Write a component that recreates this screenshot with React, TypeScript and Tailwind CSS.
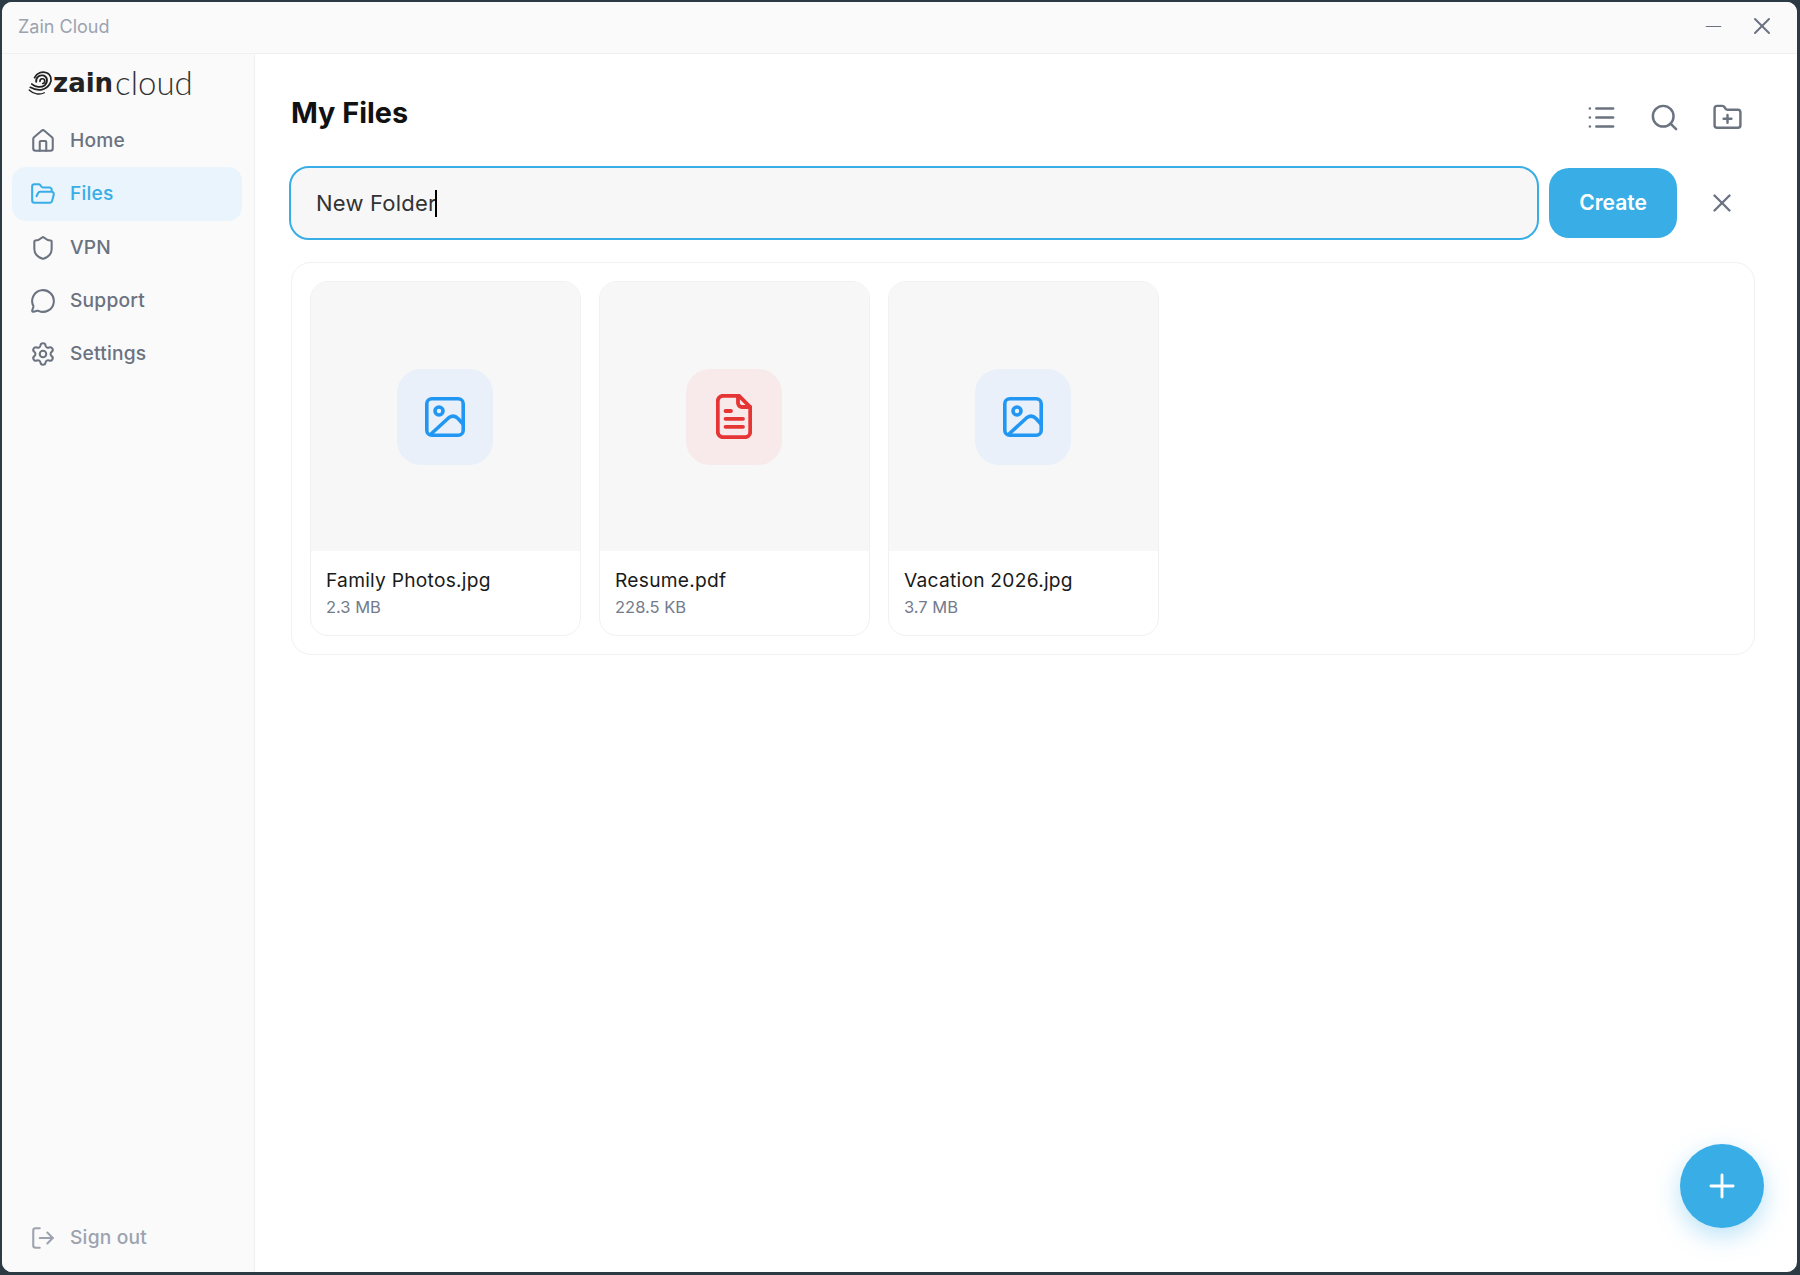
import { FolderOpen, FolderPlus, House, List, LogOut, MessageCircle, Minus, Plus, Search, Settings, Shield, X } from "lucide-react";

const NAV = [
  { label: "Home", icon: House },
  { label: "Files", icon: FolderOpen, active: true },
  { label: "VPN", icon: Shield },
  { label: "Support", icon: MessageCircle },
  { label: "Settings", icon: Settings },
];

const FILES = [
  { name: "Family Photos.jpg", size: "2.3 MB", kind: "image" },
  { name: "Resume.pdf", size: "228.5 KB", kind: "pdf" },
  { name: "Vacation 2026.jpg", size: "3.7 MB", kind: "image" },
];

const ImageGlyph = () => (
  <svg viewBox="0 0 40 40" className="h-10 w-10" fill="none" stroke="#2196f3" strokeWidth="3.6" strokeLinecap="round" strokeLinejoin="round">
    <rect x="1.8" y="1.8" width="36.4" height="36.4" rx="5" />
    <circle cx="14" cy="14" r="4" />
    <path d="M6 37 L24 20.5 Q29 17.5 33 21.5 L38 27" />
  </svg>
);

const PdfGlyph = () => (
  <svg viewBox="0 0 36 45" className="h-[45px] w-9" fill="none" stroke="#e53535" strokeWidth="3.8" strokeLinecap="round" strokeLinejoin="round">
    <path d="M23 1.8 H7 a5.2 5.2 0 0 0 -5.2 5.2 V38 a5.2 5.2 0 0 0 5.2 5.2 H29 a5.2 5.2 0 0 0 5.2 -5.2 V13 Z" />
    <path d="M22 2 V9 a4 4 0 0 0 4 4 H34" />
    <path d="M9.5 17 H15 M9.5 24.8 H27 M9.5 32.8 H27" />
  </svg>
);

const Swirl = () => (
  <svg viewBox="0 0 24 24" className="h-[26px] w-[26px] shrink-0" fill="none" stroke="#222" strokeLinecap="round">
    <path d="M12 10.5 a2.2 2.2 0 1 1 2.5 2" strokeWidth="1.5" />
    <path d="M8.5 11 C8 6 12 4.5 15 5 C19 6 19.5 11 16.5 14 C13 16.5 8 16 4.5 13" strokeWidth="1.7" />
    <path d="M7 7 C9 2.5 14 1 18 2.5 C22 4 23.5 9 21 13 C18 18 11 20.5 3 16" strokeWidth="1.6" />
    <path d="M2 18.5 C6 22.5 12 23 16 21" strokeWidth="1.2" />
  </svg>
);

const App = () => {
  return (
    <div className="h-screen w-full bg-[#2c3a44] pt-[2px] pl-[2px] pr-[3px] pb-[3px] font-['Inter',sans-serif]">
      <div className="flex h-full flex-col overflow-hidden rounded-[10px] bg-white">
        {/* title bar */}
        <div className="flex h-[52px] shrink-0 items-center justify-between border-b border-[#f0f0f0] bg-[#fafafa] pb-[3px] pl-[16px] pr-[21px]">
          <span className="text-[18px] text-[#9ca3af]">Zain Cloud</span>
          <div className="flex items-center gap-[22px] text-[#6b7280]">
            <Minus className="h-[25px] w-[25px]" strokeWidth={1} />
            <X className="h-[28px] w-[28px]" strokeWidth={1.7} />
          </div>
        </div>

        <div className="flex min-h-0 flex-1">
          {/* sidebar */}
          <aside className="flex w-[253px] shrink-0 flex-col border-r border-[#f0f0f0] bg-[#fafafa] pb-[20px] pl-[10px] pr-[12px]">
            <div className="flex h-[50px] items-center pl-[15px] pt-[7px]">
              <Swirl />
              <span className="font-['DejaVu_Sans',sans-serif] text-[26px] leading-none font-bold text-[#222]">zain</span>
              <span className="ml-[2px] font-['Lato',sans-serif] text-[33px] leading-none font-light text-[#333]">cloud</span>
            </div>
            <nav className="flex flex-col pt-[10px]">
              {NAV.map((item) => (
                <div
                  key={item.label}
                  className={`mb-[-0.7px] flex h-[54px] items-center gap-[14px] rounded-[14px] pl-[18px] text-[19.2px] font-medium tracking-[0.2px] ${
                    item.active ? "bg-[#eaf4fc] text-[#38ade6]" : "text-[#6b7280]"
                  }`}
                >
                  <item.icon className="h-[26px] w-[26px]" strokeWidth={1.9} />
                  <span className="pb-[1px]">{item.label}</span>
                </div>
              ))}
            </nav>
            <div className="mt-auto flex items-center gap-[14px] pl-[18px] text-[19.2px] font-medium tracking-[0.2px] text-[#9ca3af]">
              <LogOut className="h-[26px] w-[26px]" strokeWidth={1.9} />
              <span>Sign out</span>
            </div>
          </aside>

          {/* main */}
          <main className="relative flex min-w-0 flex-1 flex-col pl-[36px] pr-[42px]">
            <div className="flex h-[112px] shrink-0 items-center justify-between pt-[6px]">
              <h1 className="text-[28.8px] font-bold text-[#111]">My Files</h1>
              <div className="mr-[12px] mt-[8px] flex items-center gap-[32px] text-[#6b7280]">
                <List className="h-[31px] w-[31px]" strokeWidth={1.9} />
                <Search className="h-[31px] w-[31px]" strokeWidth={1.9} />
                <FolderPlus className="h-[31px] w-[31px]" strokeWidth={1.9} />
              </div>
            </div>

            <div className="ml-[-2px] mr-[-12px] flex h-[74px] shrink-0 items-center">
              <div className="flex h-[74px] flex-1 items-center rounded-[20px] border-2 border-[#38ade6] bg-[#f7f7f7] pl-[25px] text-[22px] tracking-[0.2px] text-[#333]">
                New Folder<span className="ml-[-1px] inline-block h-[27px] w-[2px] bg-black" />
              </div>
              <button className="ml-[10px] h-[70px] w-[128px] rounded-[20px] bg-[#38ade6] text-[21px] font-semibold text-white">
                Create
              </button>
              <div className="flex w-[90px] items-center justify-center text-[#6b7280]">
                <X className="h-[30px] w-[30px]" strokeWidth={1.9} />
              </div>
            </div>

            <div className="mt-[22px] grid grid-cols-[repeat(auto-fill,271px)] gap-[18px] rounded-[20px] border border-[#f1f1f1] p-[18px]">
              {FILES.map((file) => (
                <div key={file.name} className="overflow-hidden rounded-[18px] border border-[#f1f1f1] bg-white">
                  <div className="flex h-[269px] items-center justify-center bg-[#f7f7f7] pr-[1px]">
                    <div
                      className={`flex h-[96px] w-[96px] items-center justify-center rounded-[24px] ${
                        file.kind === "pdf" ? "bg-[#f8eaea]" : "bg-[#e9f0fa]"
                      }`}
                    >
                      {file.kind === "pdf" ? <PdfGlyph /> : <ImageGlyph />}
                    </div>
                  </div>
                  <div className="h-[84px] px-[15px] pt-[16px]">
                    <div className="text-[19.2px] leading-[27px] tracking-[0.25px] text-[#1a1a1a]">{file.name}</div>
                    <div className="mt-[2px] text-[16.5px] leading-[23px] text-[#737b8c]">{file.size}</div>
                  </div>
                </div>
              ))}
            </div>

            <button className="absolute right-[33px] bottom-[44px] flex h-[84px] w-[84px] items-center justify-center rounded-full bg-[#38ade6] text-white shadow-[0_8px_24px_rgba(56,173,230,0.35)]">
              <Plus className="h-[38px] w-[38px]" strokeWidth={1.8} />
            </button>
          </main>
        </div>
      </div>
    </div>
  );
};

export default App;
